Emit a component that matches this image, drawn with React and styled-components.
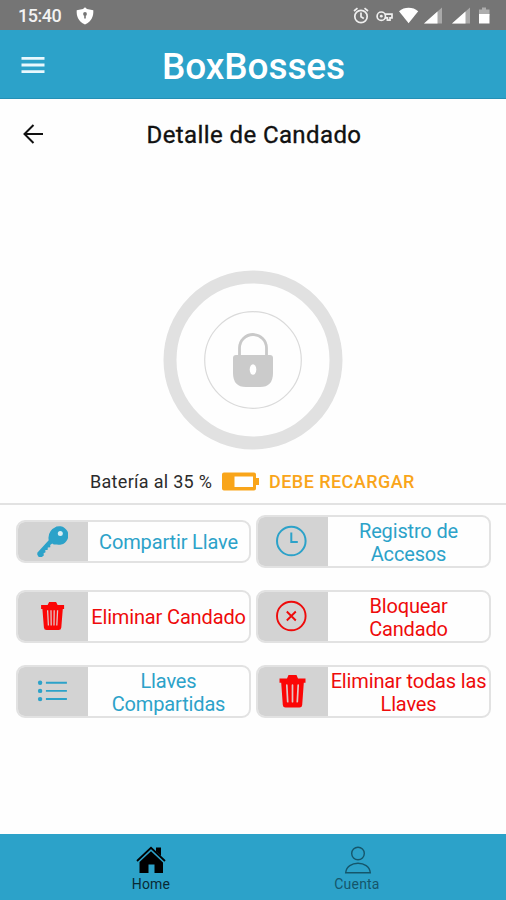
import React from "react";
import styled, { createGlobalStyle } from "styled-components";

const BLUE = "#2ca2c9";
const RED = "#ee0b0b";

const GlobalStyle = createGlobalStyle`
  * {
    box-sizing: border-box;
  }
  body {
    margin: 0;
    background: #fff;
    font-family: Roboto, "Liberation Sans", sans-serif;
  }
  svg {
    display: block;
    flex: none;
  }
`;

const Screen = styled.div`
  display: flex;
  flex-direction: column;
  width: 506px;
  height: 900px;
  overflow: hidden;
  background: #fefefe;
`;

const StatusBar = styled.div`
  display: flex;
  align-items: center;
  justify-content: space-between;
  height: 30px;
  padding: 2px 15px 0 18px;
  background: #757575;
`;

const StatusGroup = styled.div`
  display: flex;
  align-items: center;
`;

const Time = styled.span`
  width: 58px;
  color: #f2f2f2;
  font-size: 18px;
  font-weight: 500;
  line-height: 20px;
  letter-spacing: -0.5px;
`;

const Header = styled.header`
  display: grid;
  grid-template-columns: 66px 1fr 66px;
  align-items: center;
  height: 69px;
  padding-top: 3px;
  background: ${BLUE};
  border-bottom: 1px solid #2490b5;
`;

const IconButton = styled.button`
  display: flex;
  justify-content: center;
  padding: 0 0 2px;
  background: none;
  border: 0;
`;

const Brand = styled.h1`
  margin: 2px 0 0 1px;
  color: #fff;
  font-size: 37px;
  font-weight: 500;
  line-height: 44px;
  letter-spacing: -0.1px;
  text-align: center;
`;

const TitleRow = styled.div`
  display: grid;
  grid-template-columns: 66px 1fr 66px;
  align-items: center;
  height: 71px;
`;

const Title = styled.h2`
  margin: 0 0 0 2px;
  color: #111;
  font-size: 24px;
  font-weight: 400;
  -webkit-text-stroke: 0.35px #111;
  letter-spacing: 0.4px;
  line-height: 28px;
  text-align: center;
`;

const LockArea = styled.div`
  display: flex;
  justify-content: center;
  padding-top: 100px;
  height: 296px;
`;

const BatteryRow = styled.div`
  display: flex;
  align-items: center;
  height: 31px;
  padding-left: 90px;
`;

const BatteryText = styled.span`
  width: 132px;
  color: #2b2b2b;
  font-size: 18px;
  letter-spacing: 0.3px;
  white-space: nowrap;
`;

const BatteryWarning = styled.span`
  margin-left: 10px;
  color: #f9a51a;
  font-size: 18px;
  font-weight: 500;
  letter-spacing: 0.45px;
  white-space: nowrap;
`;

const Divider = styled.div`
  height: 2px;
  margin-top: 6px;
  background: #e2e2e2;
`;

const Actions = styled.div`
  display: grid;
  grid-template-columns: 235px 235px;
  grid-auto-rows: 53px;
  gap: 22px 5px;
  align-items: center;
  flex: 1;
  align-content: start;
  padding: 10px 0 0 16px;
`;

const ActionButton = styled.button`
  display: flex;
  align-items: stretch;
  height: ${(props) => (props.$short ? 43 : 53)}px;
  padding: 0;
  overflow: hidden;
  background: #fefefe;
  border: 2px solid #e2e2e2;
  border-radius: 9px;
  color: ${(props) => props.$color};
  font-family: inherit;
`;

const ActionIcon = styled.span`
  display: flex;
  align-items: center;
  justify-content: center;
  flex: none;
  width: 72px;
  margin: -1px 0 -1px -2px;
  padding-bottom: 2px;
  background: #d3d3d3;
`;

const ActionLabel = styled.span`
  display: flex;
  align-items: center;
  justify-content: center;
  flex: 1;
  padding-top: 2px;
  font-size: 20px;
  letter-spacing: -0.15px;
  line-height: 23px;
  text-align: center;
  white-space: pre;
`;

const BottomNav = styled.nav`
  display: grid;
  grid-template-columns: 206px 206px;
  justify-content: center;
  height: 66px;
  padding: 12px 0 0 2px;
  background: ${BLUE};
`;

const NavItem = styled.a`
  display: flex;
  flex-direction: column;
  align-items: center;
  color: ${(props) => (props.$active ? "#092a35" : "#15566b")};
  font-size: 14px;
  letter-spacing: 0.2px;
  line-height: 16px;
  gap: 2px;
`;

// status bar icons
const ShieldIcon = () => (
  <svg width="18" height="18" viewBox="0 0 18 18">
    <path d="M9 .3 11 2l6.3 1.2c.3 5.7-1.2 10.800-8.300 14.300C1.900 14 .4 8.900.700 3.200L7 2z" fill="#fff" />
    <circle cx="9" cy="6.900" r="1.900" fill="#757575" />
    <path d="M8.200 7h1.600v4.500H8.200z" fill="#757575" />
  </svg>
);

const StatusIcons = () => (
  <svg width="138" height="20" viewBox="353 5.500 138 20">
    <g fill="none" stroke="#efefef" strokeWidth="1.700">
      <circle cx="361" cy="16" r="6.200" />
      <path d="M354 10.500 357.500 7.700M368 10.500 364.500 7.700M361 12v4.200l2.800 1.700" />
      <circle cx="381.300" cy="15.700" r="4.200" />
      <path d="M384.800 13.700h7.200v3.600h-2v2.300h-2.600v-2.300h-2.600" />
    </g>
    <circle cx="381.300" cy="15.700" r="1.400" fill="#efefef" />
    <path d="M399 10.800c5.400-4.600 13.800-4.600 19.200 0L408.600 22.800z" fill="#fff" />
    <path d="M442 7v16h-18z" fill="#a9a9a9" />
    <path d="M437.500 11v12H424z" fill="#fff" />
    <path d="M470 7v16h-18z" fill="#a9a9a9" />
    <path d="M465.500 11v12H452z" fill="#fff" />
    <path d="M482 7h4v2h3.500v6h-10.500V9h3z" fill="#adadad" />
    <path d="M479 13.500h10.500V23H479z" fill="#fff" />
  </svg>
);

const MenuIcon = () => (
  <svg width="24" height="18" viewBox="0 0 24 18" fill="#e9f8fd">
    <path d="M.5 1h23v2.800H.5zM.5 7.600h23v2.800H.5zM.5 14.200h23V17H.5z" />
  </svg>
);

const BackIcon = () => (
  <svg width="22" height="20" viewBox="0 0 22 20" fill="none" stroke="#111" strokeWidth="2">
    <path d="M21 10H2.500M11.500 1 2.500 10l9 9" />
  </svg>
);

const LockDial = () => (
  <svg width="180" height="180" viewBox="0 0 180 180">
    <circle cx="90" cy="90" r="83" fill="none" stroke="#e1e1e1" strokeWidth="13" />
    <circle cx="90" cy="90" r="48.300" fill="none" stroke="#dadada" strokeWidth="1.200" />
    <path d="M76.500 87V78a13.500 13.500 0 0 1 27 0V87" fill="none" stroke="#c9c9c9" strokeWidth="2.800" />
    <path d="M73 85h34q3 0 3 3v15q0 14-13 14H83q-13 0-13-14V88q0-3 3-3z" fill="#cbcbcb" />
    <ellipse cx="90" cy="99.500" rx="3.300" ry="5.200" fill="#fff" />
  </svg>
);

const BatteryIcon = () => (
  <svg width="37" height="19" viewBox="0 0 37 19">
    <path d="M2 .5h30q2 0 2 2V6h3v7h-3v3.500q0 2-2 2H2q-2 0-2-2v-14q0-2 2-2z" fill="#f9a51a" />
    <path d="M12.500 4.500H31v10.500H12.500z" fill="#fff" />
  </svg>
);

// action icons
const KeyIcon = () => (
  <svg width="32" height="32" viewBox="0 0 32 32">
    <path d="M20.500 1.500a9.300 9.300 0 1 1 .5 18q-3 .4-4.800-1.100l-2 1.700.1 2.200-2.500.2-.2 2.500-2.300.1.200 2.200-1.900.9.200 2.400-2.100 1.500H2.800L1.300 29.800v-2L12.700 15.300q-1.600-9.300 7.800-13.800z" fill={BLUE} />
    <circle cx="24.300" cy="8.500" r="2.500" fill="#d9eef4" />
  </svg>
);

const TrashIcon = () => (
  <svg width="28" height="34" viewBox="-.5 0 28 34">
    <path d="M1 4.500h7.500L10 1h8l1.500 3.500H27v4.200h-1.700L23.700 31q-.2 2.500-2.700 2.500H7Q4.500 33.500 4.300 31L2.700 8.700H1z" fill="#fb0606" />
    <path d="m8.300 11.200.9 16.500M14 11.200v16.500M19.700 11.200l-.9 16.500" stroke="#e1c5c5" strokeWidth="1.700" strokeLinecap="round" />
  </svg>
);

const SmallTrashIcon = () => (
  <svg width="24" height="30" viewBox="-.6 0 24 30" overflow="visible">
    <path d="M.5 4H7l1.500-3h7L17 4h6.500v4h-1.300l-1.500 18.500q-.2 2.500-2.700 2.500H6q-2.500 0-2.700-2.500L1.800 8H.5z" fill="#fb0606" />
    <path d="m7 9.200.8 15.300M10.400 9.200l.2 15.300M13.600 9.200l-.2 15.300M17 9.200l-.8 15.300" stroke="#e1c5c5" strokeWidth="1.300" />
  </svg>
);

const ClockIcon = () => (
  <svg width="32" height="32" viewBox=".7 0 32 32" fill="none" stroke={BLUE} strokeWidth="2">
    <circle cx="16" cy="16" r="14.300" />
    <path d="M16 7.500V17h6.500" />
  </svg>
);

const BlockIcon = () => (
  <svg width="32" height="32" viewBox=".7 0 32 32" fill="none" stroke={RED} strokeWidth="1.900">
    <circle cx="16" cy="16" r="14.300" />
    <path d="m11.500 11.500 9 9M20.500 11.500l-9 9" />
  </svg>
);

const ListIcon = () => (
  <svg width="30" height="22" viewBox="-.4 0 30 22" fill={BLUE}>
    <circle cx="2.700" cy="2.700" r="2.200" />
    <circle cx="2.700" cy="10.900" r="2.200" />
    <circle cx="2.700" cy="19.100" r="2.200" />
    <path d="M8.500 1.800h21v1.900h-21zM8.500 9.900h21v1.900h-21zM8.500 18.100h21V20h-21z" />
  </svg>
);

// bottom tabs icons
const HomeIcon = () => (
  <svg width="30" height="28" viewBox="0 0 30 28">
    <path d="M1 15 15 1.800 29 15" fill="none" stroke="#000" strokeWidth="1.800" />
    <path d="M20 1.500h5v8.500l-5-4.500z" />
    <path d="m15 5.200 12 11.300V27h-8.500v-8.500h-6V27H3.500V16z" />
  </svg>
);

const UserIcon = () => (
  <svg width="28" height="28" viewBox="-1 0 28 28" overflow="visible" fill="none" stroke="#15566b" strokeWidth="1.400">
    <circle cx="14" cy="7.500" r="6.300" />
    <path d="M1.700 26.800C2.300 20.500 8 17.300 14 17.300s11.700 3.200 12.300 9.500z" />
  </svg>
);

const actions = [
  { label: "Compartir Llave", icon: <KeyIcon />, color: BLUE, short: true },
  { label: "Registro de\nAccesos", icon: <ClockIcon />, color: BLUE },
  { label: "Eliminar Candado", icon: <SmallTrashIcon />, color: RED },
  { label: "Bloquear\nCandado", icon: <BlockIcon />, color: RED },
  { label: "Llaves\nCompartidas", icon: <ListIcon />, color: BLUE },
  { label: "Eliminar todas las\nLlaves", icon: <TrashIcon />, color: RED },
];

export default function App() {
  return (
    <>
      <GlobalStyle />
      <Screen>
        <StatusBar>
          <StatusGroup>
            <Time>15:40</Time>
            <ShieldIcon />
          </StatusGroup>
          <StatusIcons />
        </StatusBar>
        <Header>
          <IconButton aria-label="Menu">
            <MenuIcon />
          </IconButton>
          <Brand>BoxBosses</Brand>
        </Header>
        <TitleRow>
          <IconButton aria-label="Volver">
            <BackIcon />
          </IconButton>
          <Title>Detalle de Candado</Title>
        </TitleRow>
        <LockArea>
          <LockDial />
        </LockArea>
        <BatteryRow>
          <BatteryText>Batería al 35 %</BatteryText>
          <BatteryIcon />
          <BatteryWarning>DEBE RECARGAR</BatteryWarning>
        </BatteryRow>
        <Divider />
        <Actions>
          {actions.map((a) => (
            <ActionButton key={a.label} $color={a.color} $short={a.short}>
              <ActionIcon>{a.icon}</ActionIcon>
              <ActionLabel>{a.label}</ActionLabel>
            </ActionButton>
          ))}
        </Actions>
        <BottomNav>
          <NavItem $active>
            <HomeIcon />
            Home
          </NavItem>
          <NavItem>
            <UserIcon />
            Cuenta
          </NavItem>
        </BottomNav>
      </Screen>
    </>
  );
}
